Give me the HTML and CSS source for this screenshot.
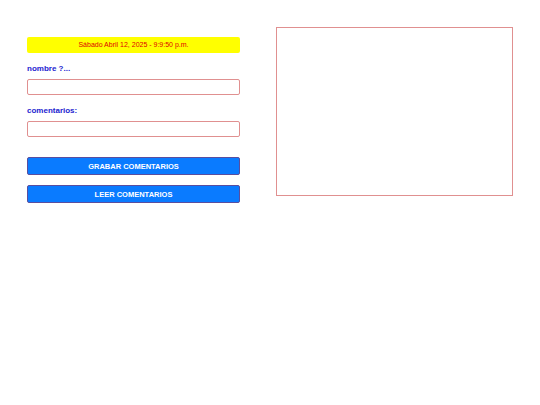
FILE: index.html
```html
<!DOCTYPE html>
<html lang="es">
<head>
<meta charset="utf-8">
<link rel="stylesheet" href="styles.css">
</head>
<body>
<div class="page">
  <div class="form">
    <div class="fecha">Sábado Abril 12, 2025 - 9:9:50 p.m.</div>
    <label class="lbl">nombre ?...</label>
    <input class="campo" type="text">
    <label class="lbl">comentarios:</label>
    <input class="campo" type="text">
    <button class="btn first">GRABAR COMENTARIOS</button>
    <button class="btn">LEER COMENTARIOS</button>
  </div>
  <div class="salida"></div>
</div>
</body>
</html>
```
FILE: styles.css
```css
html, body { margin: 0; padding: 0; background: #fff; }
body { font-family: "Liberation Sans", Arial, sans-serif; }
.page { display: flex; align-items: flex-start; padding: 27px 0 0 27px; gap: 36px; }
.form { width: 213px; display: flex; flex-direction: column; padding-top: 10px; }
.fecha {
  background: #ffff00; color: #e00000; font-size: 7px; height: 16px;
  line-height: 16px; text-align: center; border-radius: 2px;
}
.lbl { color: #2323d0; font-weight: bold; font-size: 8px; margin-top: 11px; line-height: 10px; height: 10px; }
.campo {
  box-sizing: border-box; width: 213px; height: 16px; margin: 5px 0 0 0;
  border-width: 1px; border-style: solid; border-color: #e09090; border-radius: 2px;
  background: #fff; padding: 0 4px; outline: none; -webkit-appearance: none; appearance: none;
}
.btn {
  box-sizing: border-box; width: 213px; height: 18px; margin: 10px 0 0 0; padding: 0;
  background: #0a7bff; color: #fff; font-family: "Liberation Sans", Arial, sans-serif;
  font-weight: bold; font-size: 7.5px; border: 1px solid #5a4e9e; border-radius: 2px;
}
.btn.first { margin-top: 20px; }
.salida { box-sizing: border-box; width: 237px; height: 169px; border: 1px solid #e09090; }
```
